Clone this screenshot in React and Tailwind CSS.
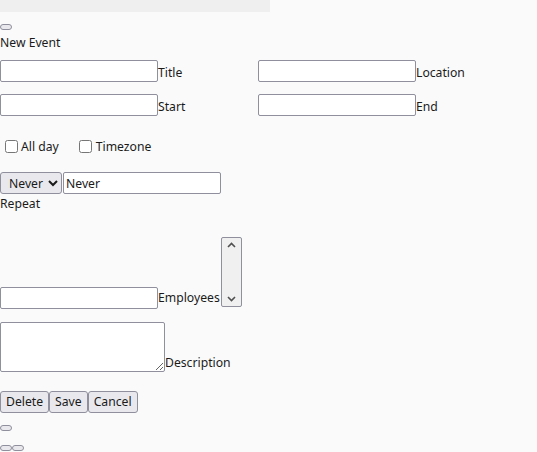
import React from 'react';

const inputCls = 'w-[158px] h-[22px] border border-[#8f8f9d] rounded-[2px] bg-white px-[2px] text-[12.2px]';
const btnCls = 'h-[22px] px-[5px] border border-[#8f8f9d] rounded-[3px] bg-[#e9e9ed] text-[12.2px] leading-none';
const tinyBtn = 'block w-[12px] h-[6px] border border-[#8f8f9d] rounded-[3px] bg-[#e9e9ed]';

const Field = ({ label }) => (
  <div className="flex items-end">
    <input className={inputCls} />
    <span className="leading-[18px]">{label}</span>
  </div>
);

export default function App() {
  return (
    <div className="min-h-[452px] bg-[#fafafa] text-[12.2px] text-[#1a1a1a]" style={{ fontFamily: '"Noto Sans", sans-serif' }}>
      <div className="h-[12px] w-[270px] bg-[#f0efef]" />
      <div className="pt-[12px]">
        <button className={tinyBtn} />
      </div>
      <div className="mt-[4px] leading-[18px]">New Event</div>

      <div className="grid grid-cols-[258px_258px] gap-y-[12px] mt-[8px]">
        <Field label="Title" />
        <Field label="Location" />
        <Field label="Start" />
        <Field label="End" />
      </div>

      <div className="flex items-center mt-[20px] h-[22px]">
        <label className="flex items-center">
          <input type="checkbox" className="ml-[5px] mr-[3px] w-[13px] h-[13px]" />
          <span>All day</span>
        </label>
        <label className="flex items-center ml-[16px]">
          <input type="checkbox" className="ml-[4px] mr-[4px] w-[13px] h-[13px]" />
          <span>Timezone</span>
        </label>
      </div>

      <div className="flex mt-[14px]">
        <select className="h-[22px] w-[62px] border border-[#8f8f9d] rounded-[3px] bg-[#e9e9ed] pl-[4px] text-[12.2px]">
          <option>Never</option>
        </select>
        <input className={`${inputCls} ml-[1px]`} defaultValue="Never" />
      </div>
      <div className="leading-[18px] mt-[1px]">Repeat</div>

      <div className="flex items-end mt-[24px]">
        <input className={`${inputCls} mb-[-2px]`} />
        <span className="leading-[18px] mr-[1px]">Employees</span>
        <div className="w-[21px] h-[70px] border border-[#8f8f9d] rounded-[2px] bg-[#f0f0f0] flex flex-col justify-between items-center py-[4px]">
          <svg width="9" height="6" viewBox="0 0 9 6"><path d="M1 5 L4.5 1.5 L8 5" fill="none" stroke="#505050" strokeWidth="1.6" /></svg>
          <svg width="9" height="6" viewBox="0 0 9 6"><path d="M1 1 L4.5 4.5 L8 1" fill="none" stroke="#505050" strokeWidth="1.6" /></svg>
        </div>
      </div>

      <div className="flex items-end mt-[15px]">
        <textarea className="w-[165px] h-[50px] border border-[#8f8f9d] rounded-[2px] bg-white block" />
        <span className="leading-[18px]">Description</span>
      </div>

      <div className="flex mt-[19px]">
        <button className={btnCls}>Delete</button>
        <button className={btnCls}>Save</button>
        <button className={btnCls}>Cancel</button>
      </div>

      <div className="mt-[12px]">
        <button className={tinyBtn} />
      </div>
      <div className="flex mt-[14px]">
        <button className={tinyBtn} />
        <button className={tinyBtn} />
      </div>
    </div>
  );
}
